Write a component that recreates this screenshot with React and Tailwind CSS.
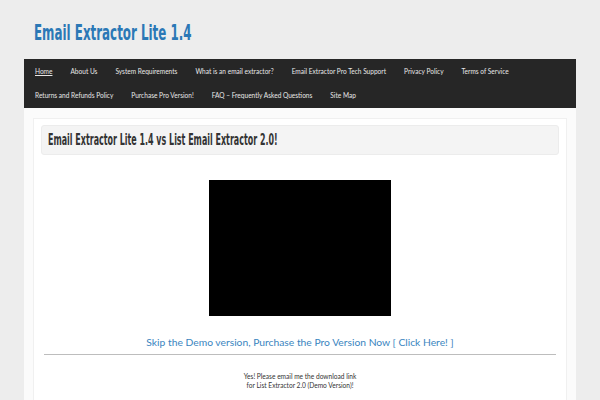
export default function App() {
  const row1 = ['Home', 'About Us', 'System Requirements', 'What is an email extractor?', 'Email Extractor Pro Tech Support', 'Privacy Policy', 'Terms of Service'];
  const row2 = ['Returns and Refunds Policy', 'Purchase Pro Version!', 'FAQ – Frequently Asked Questions', 'Site Map'];
  const cond = { fontFamily: '"Liberation Sans Narrow", "DejaVu Sans Condensed", sans-serif' };

  return (
    <div className="w-[600px] h-[400px] overflow-hidden bg-[#ededed] font-['Lato',sans-serif]">
      {/* Site title */}
      <div className="h-[59px] pl-[34px] pt-[20px]">
        <h1 style={cond} className="inline-block origin-left scale-x-[0.6] text-[22px] leading-[26px] text-[#2b78b6] font-bold whitespace-nowrap">
          Email Extractor Lite 1.4
        </h1>
      </div>

      <div className="mx-[24px]">
        {/* Nav */}
        <nav className="bg-[#262626] px-[11px] text-[6.55px] text-[#e6e6e6]">
          <ul className="flex gap-[18px] h-[25px] items-center">
            {row1.map((t, i) => (
              <li key={t} className={i === 0 ? 'underline' : ''}>{t}</li>
            ))}
          </ul>
          <ul className="flex gap-[18px] h-[24px] items-center">
            {row2.map(t => <li key={t}>{t}</li>)}
          </ul>
        </nav>

        {/* Content */}
        <div className="bg-[#fbfbfb] pt-[10px] px-[9px] h-[300px]">
          <div className="border border-[#f0f0f0] bg-white h-full px-[7px] pt-[6px]">
            <div className="bg-[#f4f4f4] border border-[#ececec] rounded-[3px] h-[30px] flex items-center px-[6px]">
              <h2 style={cond} className="inline-block origin-left scale-x-[0.59] text-[15px] text-[#333] font-bold whitespace-nowrap">
                Email Extractor Lite 1.4 vs List Email Extractor 2.0!
              </h2>
            </div>

            <div className="flex justify-center mt-[25px]">
              <div className="w-[182px] h-[136px] bg-black" />
            </div>

            <p className="text-center text-[10.3px] text-[#3a85c0] mt-[18px] leading-[16px]">
              Skip the Demo version, Purchase the Pro Version Now [ Click Here! ]
            </p>
            <hr className="mx-[3px] mt-[4px] border-t border-[#bdbdbd]" />

            <div className="text-center text-[6.6px] text-[#333] leading-[9px] mt-[17px]">
              <p>Yes! Please email me the download link</p>
              <p>for List Extractor 2.0 (Demo Version)!</p>
            </div>
          </div>
        </div>
      </div>
    </div>
  );
}
